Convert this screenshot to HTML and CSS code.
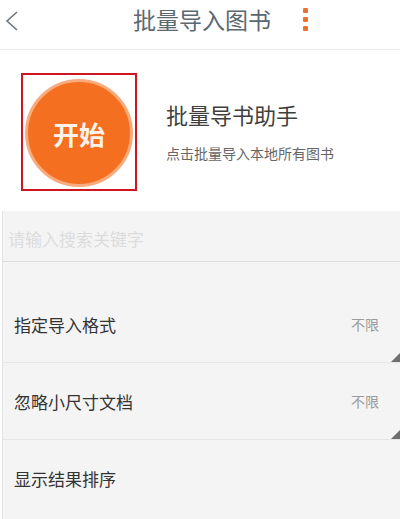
FILE: index.html
```html
<!DOCTYPE html>
<html lang="zh-CN">
<head>
    <meta charset="UTF-8">
    <meta name="viewport" content="width=device-width, initial-scale=1.0">
    <title>批量导入图书</title>
    <link rel="stylesheet" href="styles.css">
</head>
<body>
    <div class="topbar">
        <svg class="back" width="14" height="22" viewBox="0 0 14 22">
            <polyline points="12,2 2,11 12,20" fill="none" stroke="#6b757c" stroke-width="1.6"/>
        </svg>
        <h1>批量导入图书</h1>
        <div class="more">
            <span></span><span></span><span></span>
        </div>
    </div>

    <div class="intro">
        <div class="start-box">
            <button class="start">开始</button>
        </div>
        <div class="intro-text">
            <h2>批量导书助手</h2>
            <p>点击批量导入本地所有图书</p>
        </div>
    </div>

    <div class="panel">
        <input class="search" type="text" placeholder="请输入搜索关键字">
        <div class="options">
            <div class="option">
                <span class="label">指定导入格式</span>
                <span class="value">不限</span>
                <i class="corner"></i>
            </div>
            <div class="option">
                <span class="label">忽略小尺寸文档</span>
                <span class="value">不限</span>
                <i class="corner"></i>
            </div>
            <div class="option">
                <span class="label">显示结果排序</span>
            </div>
        </div>
    </div>
</body>
</html>
```

FILE: styles.css
```css
* {
    box-sizing: border-box;
}

body {
    margin: 0;
    font-family: "Noto Sans CJK SC", "Noto Sans", sans-serif;
    background: #fff;
    width: 400px;
    height: 519px;
    overflow: hidden;
}

.topbar {
    height: 50px;
    display: flex;
    align-items: center;
    border-bottom: 1px solid #ebebeb;
    position: relative;
}

.back {
    margin-left: 5px;
    margin-top: -8px;
}

.topbar h1 {
    position: absolute;
    left: 133px;
    top: 2px;
    margin: 0;
    font-size: 23px;
    font-weight: normal;
    color: #5b6870;
    line-height: 34px;
}

.more {
    position: absolute;
    left: 303px;
    top: 8px;
    display: flex;
    flex-direction: column;
    gap: 4px;
}

.more span {
    width: 5px;
    height: 5px;
    border-radius: 1px;
    background: #e8732f;
}

.intro {
    height: 161px;
    display: flex;
    align-items: flex-start;
    padding: 23px 0 0 21px;
}

.start-box {
    width: 116px;
    height: 118px;
    border: 2px solid #cf1520;
    display: flex;
    align-items: center;
    justify-content: center;
    padding-top: 2px;
}

.start {
    width: 108px;
    height: 108px;
    border-radius: 50%;
    border: 3px solid #f8ab7c;
    background: #f47020;
    color: #fdf3ea;
    font-family: inherit;
    font-size: 26px;
    font-weight: bold;
    padding: 0;
    cursor: pointer;
}

.intro-text {
    margin-left: 29px;
    padding-top: 25px;
}

.intro-text h2 {
    margin: 0;
    font-size: 22px;
    font-weight: normal;
    color: #3f3f3f;
    line-height: 32px;
}

.intro-text p {
    margin: 14px 0 0;
    font-size: 14px;
    color: #666;
    line-height: 18px;
}

.panel {
    margin-left: 2px;
    border-left: 1px solid #e4e4e4;
    background: #f4f4f4;
    height: 308px;
}

.search {
    display: block;
    width: 100%;
    height: 51px;
    border: none;
    border-bottom: 1px solid #dedede;
    background: #f4f4f4;
    padding: 5px 0 0 5px;
    font-family: inherit;
    font-size: 17px;
    outline: none;
}

.search::placeholder {
    color: #dcdcdc;
}

.options {
    padding-top: 24px;
}

.option {
    height: 77px;
    display: flex;
    align-items: center;
    justify-content: space-between;
    padding: 0 21px 0 11px;
    border-bottom: 1px solid #e6e6e6;
    position: relative;
}

.option:last-child {
    border-bottom: none;
}

.label {
    font-size: 17px;
    color: #333;
}

.value {
    font-size: 14px;
    color: #9a9a9a;
}

.corner {
    position: absolute;
    right: 0;
    bottom: 0;
    width: 0;
    height: 0;
    border-left: 9px solid transparent;
    border-bottom: 9px solid #6f6f6f;
}
```
